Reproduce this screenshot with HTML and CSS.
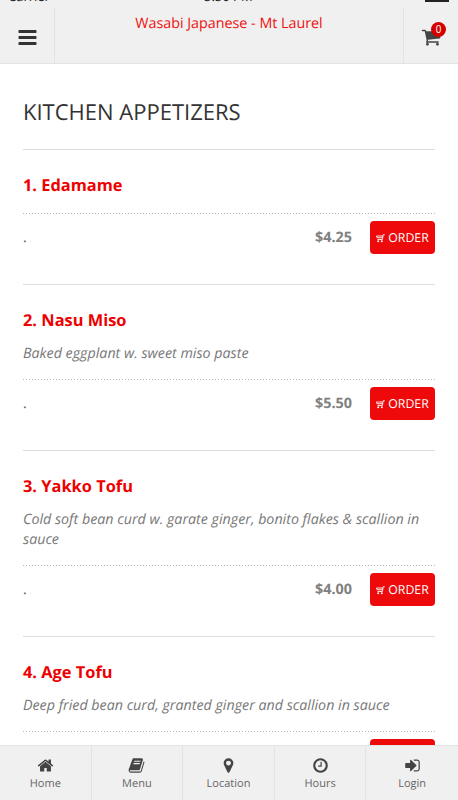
FILE: index.html
```html
<!DOCTYPE html>
<html lang="en">
<head>
<meta charset="utf-8">
<title>Wasabi Japanese - Mt Laurel</title>
<link rel="stylesheet" href="styles.css">
</head>
<body>
<svg class="sprite" width="0" height="0" aria-hidden="true">
  <symbol id="i-cart" viewBox="0 0 1792 1792"><path d="M704 1536q0 52-38 90t-90 38-90-38-38-90 38-90 90-38 90 38 38 90zm896 0q0 52-38 90t-90 38-90-38-38-90 38-90 90-38 90 38 38 90zm128-1088v512q0 24-16.500 42.500t-40.500 21.500l-1044 122q13 60 13 70 0 16-24 64h920q26 0 45 19t19 45-19 45-45 19h-1024q-26 0-45-19t-19-45q0-11 8-31.500t16-36 21.500-40 15.500-29.500l-177-823h-204q-26 0-45-19t-19-45 19-45 45-19h256q16 0 28.500 6.500t19.500 15.500 13 24.500 8 26 5.500 29.500 4.500 26h1201q26 0 45 19t19 45z"/></symbol>
  <symbol id="i-mini" viewBox="0 0 10 10"><path d="M9.800 1.400H7.900L7.200 6.600H1.700M.4 2.800H7.600M1 4.700H7.300" fill="none" stroke="currentColor" stroke-width="1"/><path d="M.4 2.800L1.200 4.700" fill="none" stroke="currentColor" stroke-width="1"/><circle cx="2.500" cy="8.600" r="1.100" fill="currentColor"/><circle cx="6.500" cy="8.600" r="1.100" fill="currentColor"/></symbol>
</svg>

<div class="screen">
  <header class="topbar">
    <div class="status">
      <span>Carrier &#8226;</span>
      <span class="clock">5:50 PM</span>
      <span class="battery"></span>
    </div>
    <div class="nav">
      <button class="nav-btn nav-menu" aria-label="Menu">
        <svg class="i-bars" viewBox="0 0 1792 1792"><path d="M1664 1344v128q0 26-19 45t-45 19h-1408q-26 0-45-19t-19-45v-128q0-26 19-45t45-19h1408q26 0 45 19t19 45zm0-512v128q0 26-19 45t-45 19h-1408q-26 0-45-19t-19-45v-128q0-26 19-45t45-19h1408q26 0 45 19t19 45zm0-512v128q0 26-19 45t-45 19h-1408q-26 0-45-19t-19-45v-128q0-26 19-45t45-19h1408q26 0 45 19t19 45z"/></svg>
      </button>
      <div class="brand">Wasabi Japanese - Mt Laurel</div>
      <button class="nav-btn nav-cart" aria-label="Cart">
        <span class="cart-wrap">
          <svg class="i-cart"><use href="#i-cart"/></svg>
          <span class="badge">0</span>
        </span>
      </button>
    </div>
  </header>

  <main class="content">
    <h1 class="section-title">KITCHEN APPETIZERS</h1>

    <article class="item">
      <h2 class="item-name">1. Edamame</h2>
      <div class="item-row">
        <span class="dot">.</span>
        <span class="price">$4.25</span>
        <button class="order"><svg class="i-mini"><use href="#i-mini"/></svg>ORDER</button>
      </div>
    </article>

    <article class="item">
      <h2 class="item-name">2. Nasu Miso</h2>
      <p class="item-desc">Baked eggplant w. sweet miso paste</p>
      <div class="item-row">
        <span class="dot">.</span>
        <span class="price">$5.50</span>
        <button class="order"><svg class="i-mini"><use href="#i-mini"/></svg>ORDER</button>
      </div>
    </article>

    <article class="item">
      <h2 class="item-name">3. Yakko Tofu</h2>
      <p class="item-desc">Cold soft bean curd w. garate ginger, bonito flakes &amp; scallion in sauce</p>
      <div class="item-row">
        <span class="dot">.</span>
        <span class="price">$4.00</span>
        <button class="order"><svg class="i-mini"><use href="#i-mini"/></svg>ORDER</button>
      </div>
    </article>

    <article class="item">
      <h2 class="item-name">4. Age Tofu</h2>
      <p class="item-desc">Deep fried bean curd, granted ginger and scallion in sauce</p>
      <div class="item-row">
        <span class="dot">.</span>
        <span class="price">$3.50</span>
        <button class="order"><svg class="i-mini"><use href="#i-mini"/></svg>ORDER</button>
      </div>
    </article>
  </main>

  <nav class="tabbar">
    <a class="tab">
      <svg class="tab-icon" viewBox="0 0 1792 1792"><path d="M1472 992v480q0 26-19 45t-45 19h-384v-384h-256v384h-384q-26 0-45-19t-19-45v-480q0-1 .5-3t.5-3l575-474 575 474q1 2 1 6zm223-69l-62 74q-8 9-21 11h-3q-13 0-21-7l-692-577-692 577q-12 8-24 7-13-2-21-11l-62-74q-8-10-7-23.500t11-21.500l719-599q32-26 76-26t76 26l244 204v-195q0-14 9-23t23-9h192q14 0 23 9t9 23v408l219 182q10 8 11 21.500t-7 23.500z"/></svg>
      <span>Home</span>
    </a>
    <a class="tab">
      <svg class="tab-icon" viewBox="0 0 1792 1792"><path d="M1703 478q40 57 18 129l-275 906q-19 64-76.500 107.500t-122.500 43.500h-923q-77 0-148.500-53.500t-99.500-131.500q-24-67-2-127 0-4 3-27t4-37q1-8-3-21.500t-3-19.500q2-11 8-21t16.500-23.500 16.500-23.500q23-38 45-91.500t30-91.500q3-10 .5-30t-.5-28q3-11 17-28t17-23q21-36 42-92t25-90q1-9-2.500-32t.5-28q4-13 22-30.500t22-22.500q19-26 42.500-84.500t27.500-96.500q1-8-3-25.500t-2-26.500q2-8 9-18t18-23 17-21q8-12 16.500-30.500t15-35 16-36 19.500-32 26.500-23.500 36-11.500 47.500 5.500l-1 3q38-9 51-9h761q74 0 114 56t18 130l-274 906q-36 119-71.500 153.500t-128.500 34.500h-869q-27 0-38 15-11 16-1 43 24 70 144 70h923q29 0 56-15.500t35-41.500l300-987q7-22 5-57 38 15 59 43zm-1064 2q-4 13 2 22.500t20 9.500h608q13 0 25.500-9.500t16.500-22.500l21-64q4-13-2-22.500t-20-9.500h-608q-13 0-25.500 9.500t-16.500 22.500zm-83 256q-4 13 2 22.500t20 9.500h608q13 0 25.500-9.500t16.500-22.500l21-64q4-13-2-22.500t-20-9.500h-608q-13 0-25.500 9.500t-16.500 22.500z"/></svg>
      <span>Menu</span>
    </a>
    <a class="tab">
      <svg class="tab-icon" viewBox="0 0 1792 1792"><path d="M1152 640q0-106-75-181t-181-75-181 75-75 181 75 181 181 75 181-75 75-181zm256 0q0 109-33 179l-364 774q-16 33-47.500 52t-67.500 19-67.500-19-46.500-52l-365-774q-33-70-33-179 0-212 150-362t362-150 362 150 150 362z"/></svg>
      <span>Location</span>
    </a>
    <a class="tab">
      <svg class="tab-icon" viewBox="0 0 1792 1792"><path d="M1024 544v448q0 14-9 23t-23 9h-320q-14 0-23-9t-9-23v-64q0-14 9-23t23-9h224v-352q0-14 9-23t23-9h64q14 0 23 9t9 23zm416 352q0-148-73-273t-198-198-273-73-273 73-198 198-73 273 73 273 198 198 273 73 273-73 198-198 73-273zm224 0q0 209-103 385.500t-279.500 279.500-385.500 103-385.500-103-279.500-279.500-103-385.500 103-385.500 279.500-279.500 385.500-103 385.500 103 279.500 279.500 103 385.500z"/></svg>
      <span>Hours</span>
    </a>
    <a class="tab">
      <svg class="tab-icon" viewBox="0 0 1792 1792"><path d="M1312 896q0 26-19 45l-544 544q-19 19-45 19t-45-19-19-45v-288h-448q-26 0-45-19t-19-45v-384q0-26 19-45t45-19h448v-288q0-26 19-45t45-19 45 19l544 544q19 19 19 45zm352-352v704q0 119-84.500 203.500t-203.500 84.500h-320q-13 0-22.500-9.500t-9.500-22.500q0-4-1-20t-.5-26.500 3-23.500 10-19.500 20.500-6.500h320q66 0 113-47t47-113v-704q0-66-47-113t-113-47h-312l-11.500-1-11.500-3-8-5.500-7-9-2-13.500q0-4-1-20t-.5-26.500 3-23.500 10-19.500 20.500-6.500h320q119 0 203.500 84.500t84.500 203.500z"/></svg>
      <span>Login</span>
    </a>
  </nav>
</div>
</body>
</html>
```
FILE: styles.css
```css
* { box-sizing: border-box; }
html, body { margin: 0; padding: 0; height: 100%; }
body { background: #fff; font-family: "Open Sans", "Liberation Sans", sans-serif; overflow: hidden; text-rendering: geometricPrecision; }
.sprite { position: absolute; }
.screen { position: relative; width: 458px; height: 800px; overflow: hidden; display: flex; flex-direction: column; }

.topbar { background: #f0f0f0; border-bottom: 1px solid #e3e3e3; height: 64px; flex: none; }
.status { height: 8px; overflow: hidden; display: flex; align-items: flex-end; padding: 0 8px; font-size: 13px; line-height: 16px; color: #222; position: relative; }
.status span { flex: none; margin-bottom: 4px; }
.status .clock { position: absolute; left: 204px; bottom: 0; }
.status .battery { position: absolute; right: 9px; bottom: 6px; width: 24px; height: 2px; background: #222; margin: 0; }
.nav { display: flex; height: 55px; }
.nav-btn { border: 0; background: transparent; padding: 0; display: flex; align-items: center; justify-content: center; flex: none; }
.nav-menu { width: 55px; border-right: 1px solid #e3e3e3; }
.nav-cart { width: 55px; border-left: 1px solid #e3e3e3; }
.i-bars { width: 21px; height: 21px; fill: #333; margin-top: 3px; }
.brand { flex: 1; text-align: center; color: #ee1111; font-size: 14.3px; line-height: 32px; }
.cart-wrap { position: relative; display: block; width: 20px; height: 20px; margin-top: 3px; }
.i-cart { width: 20px; height: 20px; fill: #444; display: block; }
.badge { position: absolute; left: 10px; top: -5px; width: 15px; height: 15px; border-radius: 50%; background: #d40000; color: #fff; font-size: 10px; line-height: 15px; text-align: center; }

.content { flex: 1; padding: 0 23px; min-height: 0; }
.section-title { margin: 0; padding: 33px 0 22px; font-size: 22px; line-height: 30px; font-weight: 400; color: #333; border-bottom: 1px solid #ddd; }
.item { border-bottom: 1px solid #ddd; padding: 24px 0 30px; }
.item-name { margin: 0; padding-bottom: 2px; font-size: 16.4px; line-height: 22px; font-weight: 700; color: #ee0000; }
.item-desc { margin: 11px 0 0; font-size: 14.25px; line-height: 20px; font-style: italic; color: #777; }
.item-row { margin-top: 15px; padding-top: 8px; display: flex; align-items: center; background-image: repeating-linear-gradient(90deg, #b5b5b5 0 1px, transparent 1px 3px); background-size: 100% 1px; background-repeat: no-repeat; background-position: 0 0; }
.dot { flex: 1; font-size: 14px; color: #555; }
.price { font-size: 14.4px; font-weight: 700; color: #808080; margin-right: 18px; }
.order { width: 65px; height: 33px; border: 0; border-radius: 4px; background: #ee0a0a; color: #fff; font: 12.3px/33px "Open Sans", sans-serif; text-rendering: geometricPrecision; padding: 0; display: flex; align-items: center; justify-content: center; gap: 3px; }
.i-mini { width: 9px; height: 10px; color: #fff; }

.tabbar { position: absolute; left: 0; right: 0; bottom: 0; height: 55px; background: #f0f0f0; border-top: 1px solid #e3e3e3; display: grid; grid-template-columns: repeat(5, 1fr); }
.tab { display: flex; flex-direction: column; align-items: center; padding-top: 11px; font-size: 11px; line-height: 16px; color: #666; border-right: 1px solid #e3e3e3; }
.tab:last-child { border-right: 0; }
.tab-icon { width: 17px; height: 17px; fill: #444; display: block; margin-bottom: 2px; }
```
